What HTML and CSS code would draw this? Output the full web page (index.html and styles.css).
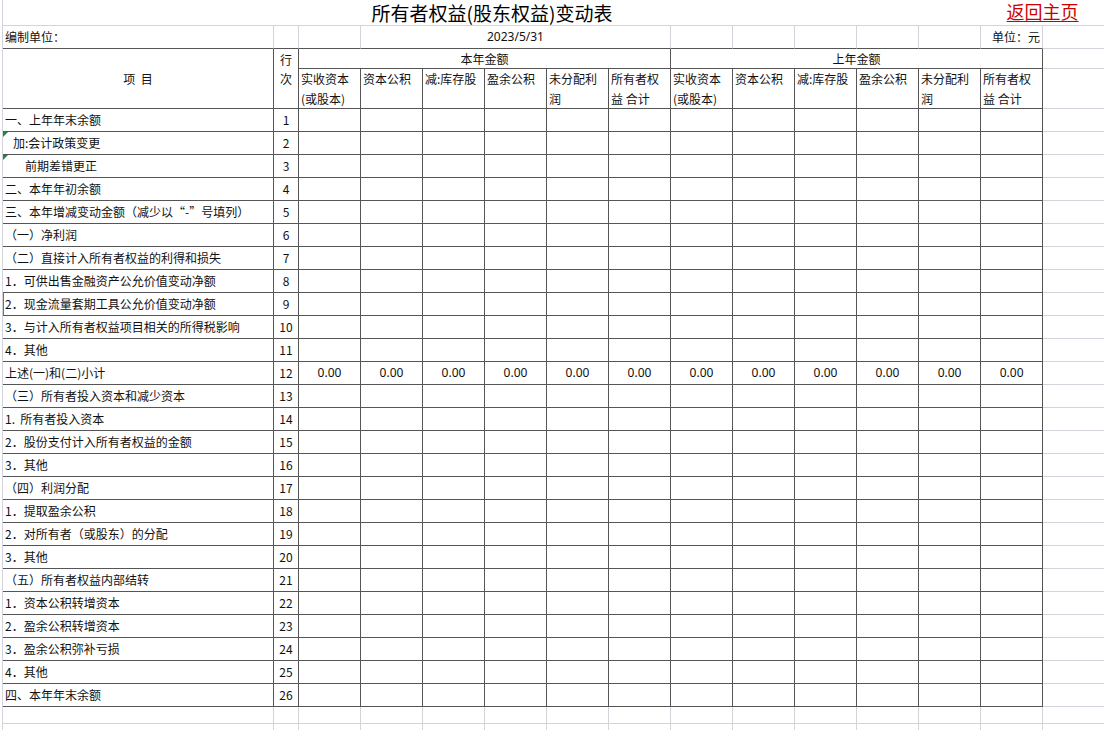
FILE: index.html
```html
<!DOCTYPE html>
<html lang="zh-CN">
<head>
<meta charset="utf-8">
<title>所有者权益(股东权益)变动表</title>
<link rel="stylesheet" href="styles.css">
</head>
<body>
<table class="sheet">
  <colgroup>
    <col class="c-item"><col class="c-no">
    <col class="c-v"><col class="c-v"><col class="c-v"><col class="c-v"><col class="c-v"><col class="c-v">
    <col class="c-v"><col class="c-v"><col class="c-v"><col class="c-v"><col class="c-v"><col class="c-v">
    <col class="c-out">
  </colgroup>
  <tr class="r-title">
    <td colspan="13" class="title">所有者权益(股东权益)变动表</td>
    <td colspan="2" class="home"><a href="#">返回主页</a></td>
  </tr>
  <tr class="r-unit">
    <td>编制单位：</td><td></td><td></td>
    <td colspan="5" class="date">2023/5/31</td>
    <td></td><td></td><td></td><td></td><td></td>
    <td class="unit">单位：元</td>
    <td class="out"></td>
  </tr>
  <tr class="r-h1">
    <td rowspan="2" class="ctr">项&nbsp;&nbsp;目</td>
    <td rowspan="2" class="no-h">行<br>次</td>
    <td colspan="6" class="ctr">本年金额</td>
    <td colspan="6" class="ctr">上年金额</td>
    <td class="out"></td>
  </tr>
  <tr class="r-h2">
    <td class="sub">实收资本<br>(或股本)</td>
    <td class="sub">资本公积</td>
    <td class="sub">减:库存股</td>
    <td class="sub">盈余公积</td>
    <td class="sub">未分配利<br>润</td>
    <td class="sub">所有者权<br>益 合计</td>
    <td class="sub">实收资本<br>(或股本)</td>
    <td class="sub">资本公积</td>
    <td class="sub">减:库存股</td>
    <td class="sub">盈余公积</td>
    <td class="sub">未分配利<br>润</td>
    <td class="sub">所有者权<br>益 合计</td>
    <td class="out"></td>
  </tr>
  <tr class="r-d"><td>一、上年年末余额</td><td class="n">1</td><td></td><td></td><td></td><td></td><td></td><td></td><td></td><td></td><td></td><td></td><td></td><td></td><td class="out"></td></tr>
  <tr class="r-d"><td class="i1 mark">加:会计政策变更</td><td class="n">2</td><td></td><td></td><td></td><td></td><td></td><td></td><td></td><td></td><td></td><td></td><td></td><td></td><td class="out"></td></tr>
  <tr class="r-d"><td class="i2 mark">前期差错更正</td><td class="n">3</td><td></td><td></td><td></td><td></td><td></td><td></td><td></td><td></td><td></td><td></td><td></td><td></td><td class="out"></td></tr>
  <tr class="r-d"><td>二、本年年初余额</td><td class="n">4</td><td></td><td></td><td></td><td></td><td></td><td></td><td></td><td></td><td></td><td></td><td></td><td></td><td class="out"></td></tr>
  <tr class="r-d"><td>三、本年增减变动金额（减少以“-”号填列）</td><td class="n">5</td><td></td><td></td><td></td><td></td><td></td><td></td><td></td><td></td><td></td><td></td><td></td><td></td><td class="out"></td></tr>
  <tr class="r-d"><td>（一）净利润</td><td class="n">6</td><td></td><td></td><td></td><td></td><td></td><td></td><td></td><td></td><td></td><td></td><td></td><td></td><td class="out"></td></tr>
  <tr class="r-d"><td>（二）直接计入所有者权益的利得和损失</td><td class="n">7</td><td></td><td></td><td></td><td></td><td></td><td></td><td></td><td></td><td></td><td></td><td></td><td></td><td class="out"></td></tr>
  <tr class="r-d"><td>1．可供出售金融资产公允价值变动净额</td><td class="n">8</td><td></td><td></td><td></td><td></td><td></td><td></td><td></td><td></td><td></td><td></td><td></td><td></td><td class="out"></td></tr>
  <tr class="r-d"><td class="sel">2．现金流量套期工具公允价值变动净额</td><td class="n">9</td><td></td><td></td><td></td><td></td><td></td><td></td><td></td><td></td><td></td><td></td><td></td><td></td><td class="out"></td></tr>
  <tr class="r-d"><td>3．与计入所有者权益项目相关的所得税影响</td><td class="n">10</td><td></td><td></td><td></td><td></td><td></td><td></td><td></td><td></td><td></td><td></td><td></td><td></td><td class="out"></td></tr>
  <tr class="r-d"><td>4．其他</td><td class="n">11</td><td></td><td></td><td></td><td></td><td></td><td></td><td></td><td></td><td></td><td></td><td></td><td></td><td class="out"></td></tr>
  <tr class="r-d"><td>上述(一)和(二)小计</td><td class="n">12</td><td class="v">0.00</td><td class="v">0.00</td><td class="v">0.00</td><td class="v">0.00</td><td class="v">0.00</td><td class="v">0.00</td><td class="v">0.00</td><td class="v">0.00</td><td class="v">0.00</td><td class="v">0.00</td><td class="v">0.00</td><td class="v">0.00</td><td class="out"></td></tr>
  <tr class="r-d"><td>（三）所有者投入资本和减少资本</td><td class="n">13</td><td></td><td></td><td></td><td></td><td></td><td></td><td></td><td></td><td></td><td></td><td></td><td></td><td class="out"></td></tr>
  <tr class="r-d"><td>1.&nbsp;&nbsp;所有者投入资本</td><td class="n">14</td><td></td><td></td><td></td><td></td><td></td><td></td><td></td><td></td><td></td><td></td><td></td><td></td><td class="out"></td></tr>
  <tr class="r-d"><td>2．股份支付计入所有者权益的金额</td><td class="n">15</td><td></td><td></td><td></td><td></td><td></td><td></td><td></td><td></td><td></td><td></td><td></td><td></td><td class="out"></td></tr>
  <tr class="r-d"><td>3．其他</td><td class="n">16</td><td></td><td></td><td></td><td></td><td></td><td></td><td></td><td></td><td></td><td></td><td></td><td></td><td class="out"></td></tr>
  <tr class="r-d"><td>（四）利润分配</td><td class="n">17</td><td></td><td></td><td></td><td></td><td></td><td></td><td></td><td></td><td></td><td></td><td></td><td></td><td class="out"></td></tr>
  <tr class="r-d"><td>1．提取盈余公积</td><td class="n">18</td><td></td><td></td><td></td><td></td><td></td><td></td><td></td><td></td><td></td><td></td><td></td><td></td><td class="out"></td></tr>
  <tr class="r-d"><td>2．对所有者（或股东）的分配</td><td class="n">19</td><td></td><td></td><td></td><td></td><td></td><td></td><td></td><td></td><td></td><td></td><td></td><td></td><td class="out"></td></tr>
  <tr class="r-d"><td>3．其他</td><td class="n">20</td><td></td><td></td><td></td><td></td><td></td><td></td><td></td><td></td><td></td><td></td><td></td><td></td><td class="out"></td></tr>
  <tr class="r-d"><td>（五）所有者权益内部结转</td><td class="n">21</td><td></td><td></td><td></td><td></td><td></td><td></td><td></td><td></td><td></td><td></td><td></td><td></td><td class="out"></td></tr>
  <tr class="r-d"><td>1．资本公积转增资本</td><td class="n">22</td><td></td><td></td><td></td><td></td><td></td><td></td><td></td><td></td><td></td><td></td><td></td><td></td><td class="out"></td></tr>
  <tr class="r-d"><td>2．盈余公积转增资本</td><td class="n">23</td><td></td><td></td><td></td><td></td><td></td><td></td><td></td><td></td><td></td><td></td><td></td><td></td><td class="out"></td></tr>
  <tr class="r-d"><td>3．盈余公积弥补亏损</td><td class="n">24</td><td></td><td></td><td></td><td></td><td></td><td></td><td></td><td></td><td></td><td></td><td></td><td></td><td class="out"></td></tr>
  <tr class="r-d"><td>4．其他</td><td class="n">25</td><td></td><td></td><td></td><td></td><td></td><td></td><td></td><td></td><td></td><td></td><td></td><td></td><td class="out"></td></tr>
  <tr class="r-d"><td>四、本年年末余额</td><td class="n">26</td><td></td><td></td><td></td><td></td><td></td><td></td><td></td><td></td><td></td><td></td><td></td><td></td><td class="out"></td></tr>
  <tr class="r-e1"><td></td><td></td><td></td><td></td><td></td><td></td><td></td><td></td><td></td><td></td><td></td><td></td><td></td><td></td><td class="out"></td></tr>
  <tr class="r-e2"><td></td><td></td><td></td><td></td><td></td><td></td><td></td><td></td><td></td><td></td><td></td><td></td><td></td><td></td><td class="out"></td></tr>
</table>
</body>
</html>
```

FILE: styles.css
```css
html, body {
  margin: 0;
  padding: 0;
  background: #ffffff;
  overflow: hidden;
}

body {
  font-family: "Noto Sans CJK SC", "Noto Sans", sans-serif;
  font-size: 12px;
  color: #111111;
}

.sheet {
  margin-left: 2px;
  width: 1102px;
  table-layout: fixed;
  border-collapse: separate;
  border-spacing: 0;
  border-left: 1px solid #d3d3db;
}

.c-item { width: 271px; }
.c-no { width: 25px; }
.c-v { width: 62px; }
.c-out { width: 61px; }

.sheet td {
  padding: 0 2px;
  border-right: 1px solid #d3d3db;
  border-bottom: 1px solid #d3d3db;
  line-height: 16px;
  vertical-align: middle;
  white-space: nowrap;
  overflow: hidden;
}

.sheet td.out {
  border-right: 0;
  border-bottom-color: #d3d3db;
}

/* row heights */
.r-title { height: 26px; }
.r-unit { height: 23px; }
.r-h1 { height: 20px; }
.r-h2 { height: 40px; }
.r-d { height: 23px; }
.r-e1 { height: 17px; }
.r-e2 { height: 23px; }

/* title row */
.sheet .r-title td {
  border-right: 0;
  line-height: 22px;
  overflow: visible;
}

.title {
  text-align: center;
  font-size: 19px;
  color: #000000;
}

.home {
  text-align: center;
  padding-left: 8px;
}

.home a {
  font-size: 18px;
  color: #cc0000;
  text-decoration: underline;
  text-underline-offset: 2px;
}

/* unit row */
.r-unit td { border-bottom-color: #555555; }

.date {
  text-align: center;
  font-family: "Noto Sans", "Noto Sans CJK SC", sans-serif;
}

.unit { text-align: right; }

/* header rows */
.r-h1 td, .r-h2 td {
  border-right-color: #555555;
  border-bottom-color: #555555;
}

.ctr { text-align: center; }

.no-h {
  text-align: center;
  vertical-align: top !important;
  line-height: 19px !important;
  padding-top: 1px !important;
}

.sub {
  vertical-align: top !important;
  line-height: 19.5px !important;
  padding-top: 0 !important;
  padding-left: 2px !important;
}

/* data rows */
.r-d td {
  border-right-color: #555555;
  border-bottom-color: #555555;
}

.n { text-align: center; }

.v {
  text-align: center;
  font-family: "Noto Sans", "Noto Sans CJK SC", sans-serif;
}

.i1 { padding-left: 10px !important; }
.i2 { padding-left: 22px !important; }

.mark, .sel { position: relative; }

.mark::before {
  content: "";
  position: absolute;
  left: 0;
  top: 0;
  border-top: 5px solid #1e8a3c;
  border-right: 5px solid transparent;
}

.sel::before {
  content: "";
  position: absolute;
  left: -1px;
  top: -1px;
  bottom: 0;
  width: 2px;
  background: #2e9a54;
}
```
